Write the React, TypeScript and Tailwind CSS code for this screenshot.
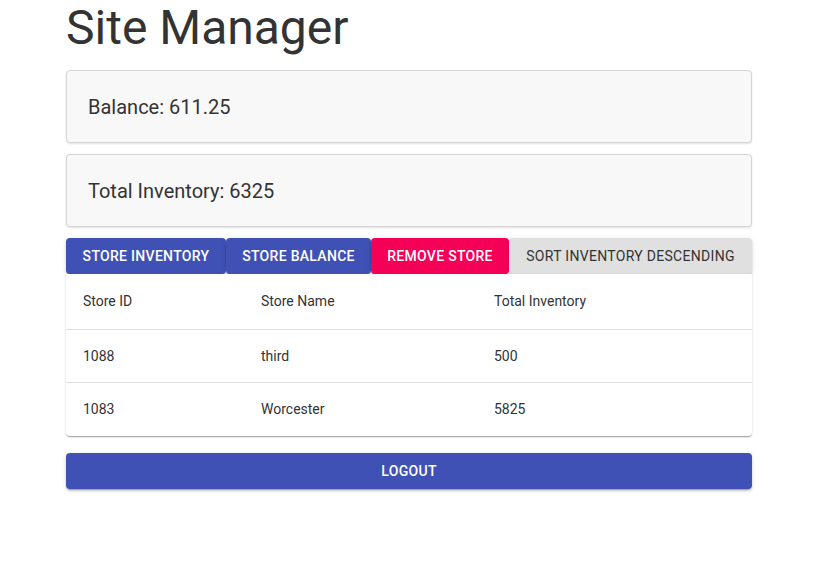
import React from 'react';

const stores = [
  { id: 1088, name: 'third', total: 500 },
  { id: 1083, name: 'Worcester', total: 5825 },
];

const btn =
  'h-[36px] flex items-center justify-center whitespace-nowrap rounded-[4px] text-[14px] font-medium uppercase tracking-[0.3px] shadow-[0_3px_1px_-2px_rgba(0,0,0,0.2),0_2px_2px_0_rgba(0,0,0,0.14),0_1px_5px_0_rgba(0,0,0,0.12)]';

const InfoCard = ({ label }: { label: string }) => (
  <div className="h-[73px] flex items-center px-[21px] bg-[#f8f8f8] border border-[#d4d4d4] rounded-[4px] shadow-[0_1px_2px_rgba(0,0,0,0.12)]">
    <span className="text-[20px] text-[#333]">{label}</span>
  </div>
);

export default function App() {
  return (
    <div className="min-h-screen bg-white font-['Roboto','Liberation_Sans',sans-serif]">
      <div className="ml-[66px] w-[686px] flex flex-col">
        <h1 className="text-[48px] leading-[56px] text-[#333] font-normal">Site Manager</h1>

        <div className="mt-[14px] flex flex-col gap-[11px]">
          <InfoCard label="Balance: 611.25" />
          <InfoCard label="Total Inventory: 6325" />
        </div>

        <div className="mt-[11px] flex">
          <button className={`${btn} w-[160px] bg-[#3f51b5] text-white`}>Store Inventory</button>
          <button className={`${btn} w-[145px] bg-[#3f51b5] text-white`}>Store Balance</button>
          <button className={`${btn} w-[138px] bg-[#f50057] text-white`}>Remove Store</button>
          <button className={`${btn} flex-1 bg-[#e0e0e0] text-[#333] font-normal`}>Sort Inventory Descending</button>
        </div>

        <div className="bg-white rounded-b-[4px] shadow-[0_2px_1px_-1px_rgba(0,0,0,0.2),0_1px_1px_0_rgba(0,0,0,0.14),0_1px_3px_0_rgba(0,0,0,0.12)] text-[14px] text-[#333]">
          <div className="grid grid-cols-[178px_233px_1fr] h-[56px] items-center border-b border-[#e0e0e0] pl-[17px]">
            <span>Store ID</span>
            <span>Store Name</span>
            <span>Total Inventory</span>
          </div>
          {stores.map((s, i) => (
            <div
              key={s.id}
              className={`grid grid-cols-[178px_233px_1fr] h-[53px] items-center pl-[17px] ${i < stores.length - 1 ? 'border-b border-[#e0e0e0]' : ''}`}
            >
              <span>{s.id}</span>
              <span>{s.name}</span>
              <span>{s.total}</span>
            </div>
          ))}
        </div>

        <button className={`${btn} mt-[17px] w-full bg-[#3f51b5] text-white`}>Logout</button>
      </div>
    </div>
  );
}
